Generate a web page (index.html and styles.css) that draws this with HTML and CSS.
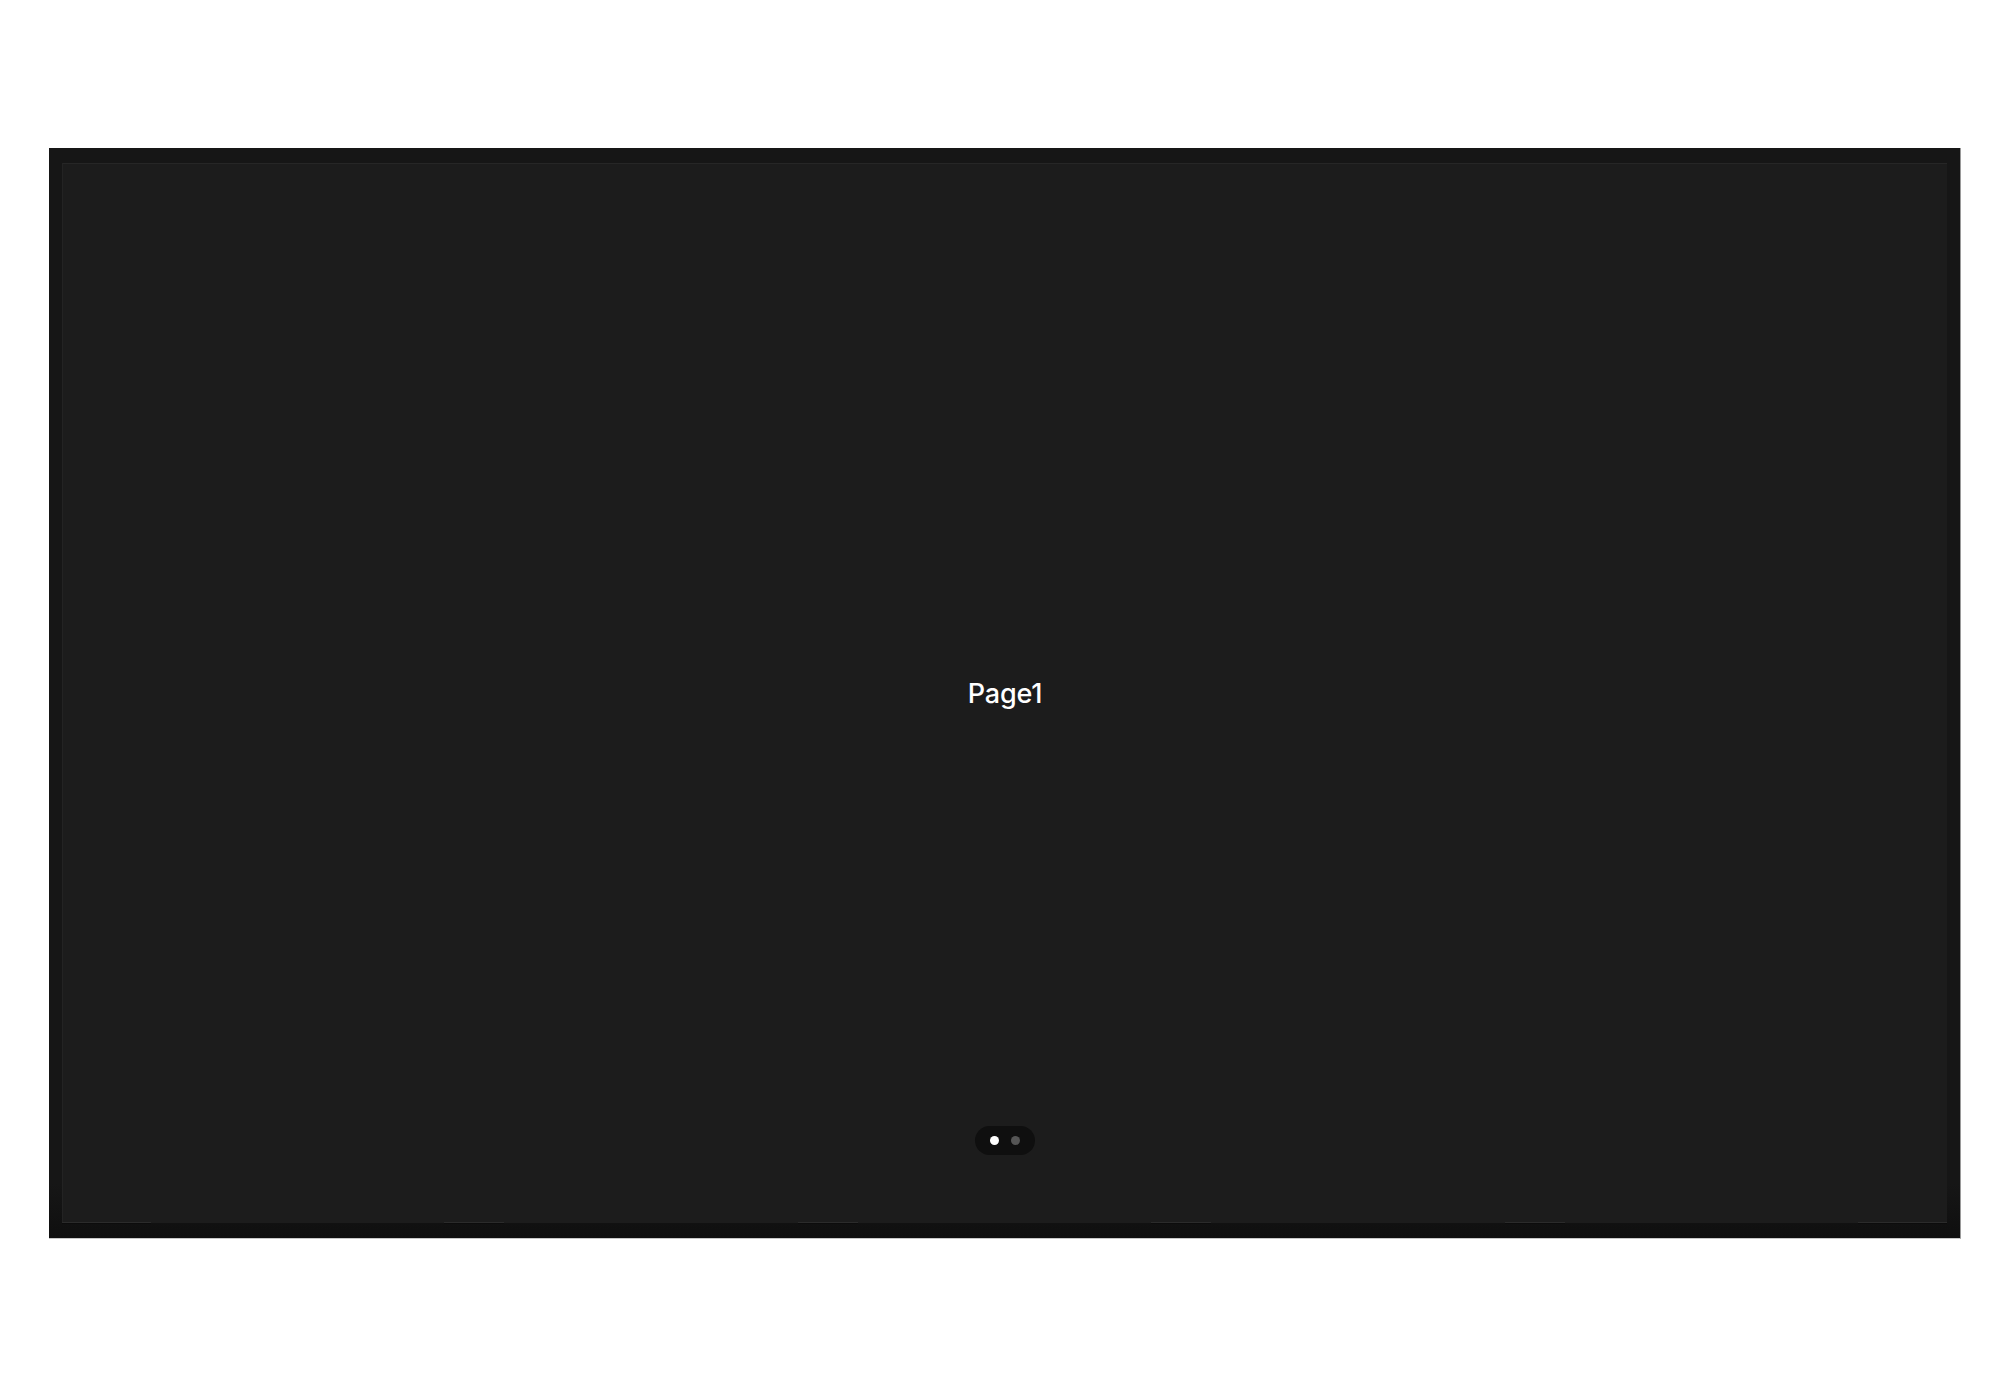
FILE: index.html
```html
<!DOCTYPE html>
<html lang="en">
<head>
<meta charset="utf-8">
<title>Page1</title>
<link rel="stylesheet" href="styles.css">
</head>
<body>
  <div class="frame">
    <div class="panel">
      <div class="page-title">Page1</div>
      <div class="pager">
        <span class="dot dot-active"></span>
        <span class="dot"></span>
      </div>
      <div class="ticks">
        <span class="tick tick-first"></span>
        <span class="tick"></span>
        <span class="tick"></span>
        <span class="tick"></span>
        <span class="tick"></span>
        <span class="tick tick-last"></span>
      </div>
    </div>
  </div>
</body>
</html>
```
FILE: styles.css
```css
html, body {
  margin: 0;
  padding: 0;
  background: #ffffff;
}
body {
  width: 2010px;
  height: 1386px;
  font-family: Inter, "Noto Sans", sans-serif;
  padding-top: 148px;
  padding-left: 49px;
  box-sizing: border-box;
}
.frame {
  width: 1912px;
  height: 1091px;
  box-sizing: border-box;
  padding: 15px 13px 15px 13px;
  background: linear-gradient(to bottom, #161616 0%, #161616 95%, #0f0f0f 100%);
  border-right: 1px solid #9a9a9a;
  border-bottom: 1px solid #c8c8c8;
}
.panel {
  position: relative;
  height: 100%;
  box-sizing: border-box;
  background: #1c1c1c;
  border-top: 1px solid #262626;
  border-left: 1px solid #232323;
  display: flex;
  align-items: center;
  justify-content: center;
}
.page-title {
  color: #ffffff;
  font-size: 27px;
  font-weight: 500;
  letter-spacing: -0.2px;
  line-height: 1;
  margin-top: -1px;
}
.pager {
  position: absolute;
  left: 50%;
  bottom: 68px;
  transform: translateX(-50%);
  width: 60px;
  height: 29px;
  border-radius: 15px;
  background: #0f0f0f;
  display: flex;
  align-items: center;
  justify-content: center;
  gap: 12px;
}
.dot {
  width: 9px;
  height: 9px;
  border-radius: 50%;
  background: #555555;
}
.dot-active {
  background: #ffffff;
}
.ticks {
  position: absolute;
  left: -1px;
  right: 0;
  bottom: -1px;
  height: 2px;
  display: flex;
  justify-content: space-between;
}
.tick {
  width: 60px;
  height: 2px;
  background: #2b2b2b;
  border-bottom: 1px solid #0c0c0c;
  box-sizing: border-box;
}
.tick-first, .tick-last {
  width: 89px;
}
```
